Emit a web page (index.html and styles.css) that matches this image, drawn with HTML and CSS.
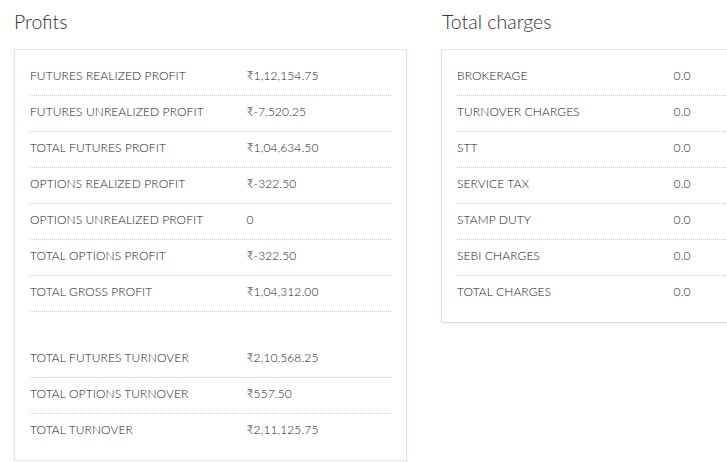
FILE: index.html
```html
<!DOCTYPE html>
<html>
<head>
<meta charset="utf-8">
<link rel="stylesheet" href="styles.css">
</head>
<body>
<div class="page">
  <section class="col">
    <h2 class="title">Profits</h2>
    <div class="panel">
      <div class="row"><span class="label">FUTURES REALIZED PROFIT</span><span class="value">₹1,12,154.75</span></div>
      <div class="row"><span class="label">FUTURES UNREALIZED PROFIT</span><span class="value">₹-7,520.25</span></div>
      <div class="row"><span class="label">TOTAL FUTURES PROFIT</span><span class="value">₹1,04,634.50</span></div>
      <div class="row"><span class="label">OPTIONS REALIZED PROFIT</span><span class="value">₹-322.50</span></div>
      <div class="row"><span class="label">OPTIONS UNREALIZED PROFIT</span><span class="value">0</span></div>
      <div class="row"><span class="label">TOTAL OPTIONS PROFIT</span><span class="value">₹-322.50</span></div>
      <div class="row"><span class="label">TOTAL GROSS PROFIT</span><span class="value">₹1,04,312.00</span></div>
      <div class="spacer"></div>
      <div class="row"><span class="label">TOTAL FUTURES TURNOVER</span><span class="value">₹2,10,568.25</span></div>
      <div class="row"><span class="label">TOTAL OPTIONS TURNOVER</span><span class="value">₹557.50</span></div>
      <div class="row last"><span class="label">TOTAL TURNOVER</span><span class="value">₹2,11,125.75</span></div>
    </div>
  </section>
  <section class="col">
    <h2 class="title">Total charges</h2>
    <div class="panel">
      <div class="row"><span class="label">BROKERAGE</span><span class="value">0.0</span></div>
      <div class="row"><span class="label">TURNOVER CHARGES</span><span class="value">0.0</span></div>
      <div class="row"><span class="label">STT</span><span class="value">0.0</span></div>
      <div class="row"><span class="label">SERVICE TAX</span><span class="value">0.0</span></div>
      <div class="row"><span class="label">STAMP DUTY</span><span class="value">0.0</span></div>
      <div class="row"><span class="label">SEBI CHARGES</span><span class="value">0.0</span></div>
      <div class="row last"><span class="label">TOTAL CHARGES</span><span class="value">0.0</span></div>
    </div>
  </section>
</div>
</body>
</html>
```
FILE: styles.css
```css
html, body {
  margin: 0;
  padding: 0;
  background: #fff;
  overflow: hidden;
}
body {
  font-family: Lato, "Liberation Sans", sans-serif;
  color: #222;
}
.page {
  display: grid;
  grid-template-columns: 393px 393px;
  column-gap: 34px;
  padding: 0 14px;
  width: max-content;
  align-items: start;
}
.title {
  margin: 0;
  height: 49px;
  padding-top: 9px;
  box-sizing: border-box;
  font-size: 19.5px;
  font-weight: 300;
  line-height: 26px;
  color: #333;
}
.col:last-child .title {
  padding-left: 1px;
}
.panel {
  border: 1px solid #e2e2e2;
  box-shadow: 0 1px 2px rgba(0,0,0,0.08);
  padding: 10px 15px;
  background: #fff;
}
.row {
  display: flex;
  height: 36px;
  box-sizing: border-box;
  padding-top: 9px;
  font-size: 12px;
  font-weight: 300;
  letter-spacing: 0.1px;
  line-height: 14px;
  border-bottom: 1px dotted #c8c8c8;
}
.row.last {
  border-bottom: none;
}
.label {
  flex: 0 0 60%;
}
.value {
  flex: 1;
}
.spacer {
  height: 30px;
}
```
